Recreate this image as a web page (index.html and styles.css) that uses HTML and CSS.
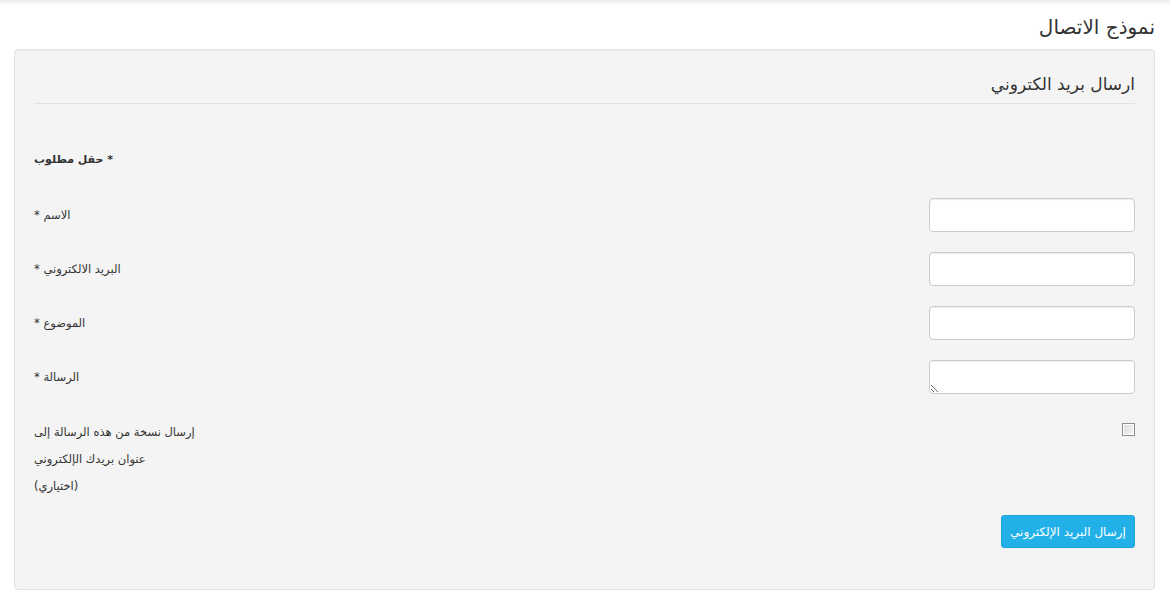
FILE: index.html
```html
<!DOCTYPE html>
<html lang="ar" dir="rtl">
<head>
  <meta charset="utf-8">
  <title>نموذج الاتصال</title>
  <link rel="stylesheet" href="styles.css">
</head>
<body>
  <div class="topbar"></div>

  <div class="page">
    <h1 class="page-title">نموذج الاتصال</h1>

    <div class="well">
      <form onsubmit="return false;">
        <fieldset>
          <legend>ارسال بريد الكتروني</legend>

          <p class="required-note"><strong>* حقل مطلوب</strong></p>

          <div class="row">
            <input type="text" id="contact-name">
            <label for="contact-name">الاسم *</label>
          </div>

          <div class="row">
            <input type="email" id="contact-email">
            <label for="contact-email">البريد الالكتروني *</label>
          </div>

          <div class="row">
            <input type="text" id="contact-subject">
            <label for="contact-subject">الموضوع *</label>
          </div>

          <div class="row">
            <textarea id="contact-message" rows="1"></textarea>
            <label for="contact-message">الرسالة *</label>
          </div>

          <div class="row row-check">
            <input type="checkbox" id="contact-copy">
            <label for="contact-copy">إرسال نسخة من هذه الرسالة إلى<br>عنوان بريدك الإلكتروني<br>(اختياري)</label>
          </div>

          <div class="actions">
            <button type="submit" class="btn-send">إرسال البريد الإلكتروني</button>
          </div>
        </fieldset>
      </form>
    </div>
  </div>
</body>
</html>
```

FILE: styles.css
```css
body {
  margin: 0;
  padding: 0;
  background-color: #fff;
  color: #333;
  font-family: "DejaVu Sans", "Noto Sans", sans-serif;
  font-size: 12px;
}

.topbar {
  height: 6px;
  background: linear-gradient(to bottom, #ececec, #fff);
}

.page {
  padding: 0 15px 0 14px;
}

.page-title {
  margin: 9px 0 0;
  height: 34px;
  line-height: 24px;
  font-size: 20px;
  font-weight: normal;
  color: #333;
}

.well {
  background-color: #f4f4f4;
  border: 1px solid #e3e3e3;
  border-radius: 4px;
  box-shadow: inset 0 1px 1px rgba(0, 0, 0, 0.05);
  padding: 19px;
}

fieldset {
  margin: 0;
  padding: 0;
  border: 0;
}

legend {
  display: block;
  width: 100%;
  padding: 0;
  margin: 0;
  height: 34px;
  line-height: 30px;
  font-size: 17px;
  color: #333;
  border-bottom: 1px solid #e2e2e2;
}

.required-note {
  margin: 46px 0 0;
  line-height: 20px;
  font-size: 11px;
  letter-spacing: -0.3px;
  text-align: left;
}

.row {
  display: flex;
  justify-content: space-between;
  align-items: center;
  height: 34px;
  margin-top: 20px;
}

.required-note + .row {
  margin-top: 28px;
}

.row label {
  font-size: 11.5px;
  text-align: left;
}

.row input[type="text"],
.row input[type="email"],
.row textarea {
  box-sizing: border-box;
  width: 206px;
  height: 34px;
  margin: 0;
  padding: 6px 8px;
  background: #fff;
  border: 1px solid #ccc;
  border-radius: 4px;
  box-shadow: inset 0 1px 1px rgba(0, 0, 0, 0.075);
  font-family: inherit;
  font-size: 13px;
}

.row-check {
  height: auto;
  align-items: flex-start;
  margin-top: 25px;
}

.row-check label {
  line-height: 27px;
  letter-spacing: -0.3px;
}

.row-check input[type="checkbox"] {
  appearance: none;
  -webkit-appearance: none;
  width: 13px;
  height: 13px;
  margin: 4px 0 0;
  border: 1px solid #8e8e8e;
  background: linear-gradient(135deg, #dcdcdc, #f6f6f6);
  box-shadow: inset 0 0 0 1px #fff;
}

.actions {
  margin-top: 15px;
  margin-bottom: 22px;
}

.btn-send {
  width: 134px;
  height: 33px;
  padding: 0;
  border: 1px solid #1ca6d9;
  border-radius: 3px;
  background-color: #21b1e8;
  color: #fff;
  font-family: inherit;
  font-size: 12px;
  cursor: pointer;
}
```
